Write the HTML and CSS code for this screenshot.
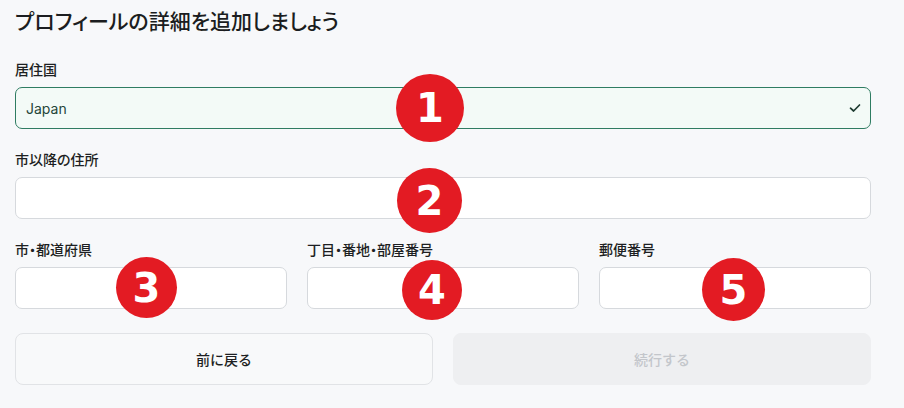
FILE: index.html
```html
<!DOCTYPE html>
<html lang="ja">
<head>
<meta charset="utf-8">
<title>プロフィールの詳細</title>
<link rel="stylesheet" href="styles.css">
</head>
<body>
<main class="page">
  <h1 class="title">プロフィールの詳細を追加しましょう</h1>

  <div class="field">
    <label class="label">居住国</label>
    <div class="control control--valid">
      <span class="value">Japan</span>
      <svg class="check" width="12" height="10" viewBox="0 0 12 10"><path d="M1.5 5.2 L4.6 8 L10.5 2" fill="none" stroke="#1e3b31" stroke-width="1.7" stroke-linecap="round" stroke-linejoin="round"/></svg>
    </div>
  </div>

  <div class="field">
    <label class="label">市以降の住所</label>
    <div class="control"></div>
  </div>

  <div class="row3">
    <div class="field">
      <label class="label">市・都道府県</label>
      <div class="control"></div>
    </div>
    <div class="field">
      <label class="label">丁目・番地・部屋番号</label>
      <div class="control"></div>
    </div>
    <div class="field">
      <label class="label">郵便番号</label>
      <div class="control"></div>
    </div>
  </div>

  <div class="actions">
    <button class="btn btn--back">前に戻る</button>
    <button class="btn btn--next" disabled>続行する</button>
  </div>

  <span class="badge badge--1">1</span>
  <span class="badge badge--2">2</span>
  <span class="badge badge--3">3</span>
  <span class="badge badge--4">4</span>
  <span class="badge badge--5">5</span>
</main>
</body>
</html>
```
FILE: styles.css
```css
* { box-sizing: border-box; }
html, body { margin: 0; padding: 0; }
body {
  background: #f7f8fa;
  font-family: Inter, "Noto Sans CJK JP", sans-serif;
  color: #1d1f22;
  width: 904px;
  height: 408px;
  overflow: hidden;
}
.page {
  position: relative;
  width: 871px;
  padding: 6px 0 0 15px;
  display: flex;
  flex-direction: column;
}
.title {
  margin: 0 0 25px;
  font-family: "Noto Sans CJK JP", sans-serif;
  font-feature-settings: "palt";
  font-size: 21px;
  line-height: 28px;
  font-weight: 500;
  color: #1b1d20;
}
.field {
  display: flex;
  flex-direction: column;
  margin-bottom: 20px;
}
.label {
  font-family: "Noto Sans CJK JP", sans-serif;
  font-feature-settings: "palt";
  font-size: 14px;
  line-height: 20px;
  font-weight: 500;
  color: #1d1f22;
  margin-bottom: 8px;
}
.control {
  height: 42px;
  border: 1px solid #d6d9dd;
  border-radius: 7px;
  background: #ffffff;
  display: flex;
  align-items: center;
  justify-content: space-between;
  padding: 0 9px 0 10px;
}
.control--valid {
  border-color: #2f7c62;
  background: #f3faf7;
}
.value {
  font-size: 14px;
  color: #24453a;
}
.check { display: block; }
.row3 {
  display: grid;
  grid-template-columns: repeat(3, 1fr);
  column-gap: 20px;
  margin-bottom: 4px;
}
.actions {
  display: grid;
  grid-template-columns: 1fr 1fr;
  column-gap: 20px;
}
.btn {
  height: 52px;
  border-radius: 8px;
  font-family: "Noto Sans CJK JP", sans-serif;
  font-size: 14px;
  font-weight: 500;
}
.btn--back {
  background: #f8f9fa;
  border: 1px solid #e1e3e6;
  color: #1d1f22;
}
.btn--next {
  background: #eeeff1;
  border: 1px solid #eeeff1;
  color: #c3c6cb;
}
.badge {
  position: absolute;
  border-radius: 50%;
  background: #e31b23;
  color: #ffffff;
  font-family: "DejaVu Sans", sans-serif;
  font-weight: 700;
  font-size: 40px;
  display: flex;
  align-items: center;
  justify-content: center;
}
.badge--1 { left: 396px; top: 74px; width: 68px; height: 68px; }
.badge--2 { left: 397px; top: 168px; width: 65px; height: 65px; }
.badge--3 { left: 116px; top: 257px; width: 61px; height: 61px; }
.badge--4 { left: 402px; top: 260px; width: 60px; height: 60px; }
.badge--5 { left: 702px; top: 258px; width: 63px; height: 63px; }
```
